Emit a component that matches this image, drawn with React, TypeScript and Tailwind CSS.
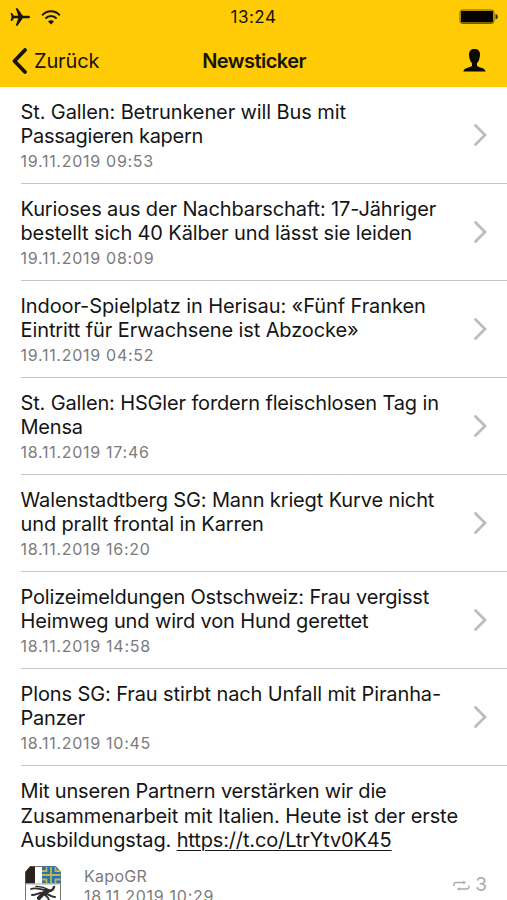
import React from 'react'

interface NewsItem {
  lines: { text: string; className: string }[];
  date: string;
}

const news: NewsItem[] = [
  {
    lines: [
      { text: 'St. Gallen: Betrunkener will Bus mit', className: 'tracking-[-0.110px]' },
      { text: 'Passagieren kapern', className: 'tracking-[-0.250px]' },
    ],
    date: '19.11.2019 09:53',
  },
  {
    lines: [
      { text: 'Kurioses aus der Nachbarschaft: 17-Jähriger', className: 'tracking-[-0.120px]' },
      { text: 'bestellt sich 40 Kälber und lässt sie leiden', className: 'tracking-[-0.130px]' },
    ],
    date: '19.11.2019 08:09',
  },
  {
    lines: [
      { text: 'Indoor-Spielplatz in Herisau: «Fünf Franken', className: 'tracking-[-0.090px]' },
      { text: 'Eintritt für Erwachsene ist Abzocke»', className: 'tracking-[-0.100px]' },
    ],
    date: '19.11.2019 04:52',
  },
  {
    lines: [
      { text: 'St. Gallen: HSGler fordern fleischlosen Tag in', className: 'tracking-[-0.150px]' },
      { text: 'Mensa', className: 'tracking-[-0.200px]' },
    ],
    date: '18.11.2019 17:46',
  },
  {
    lines: [
      { text: 'Walenstadtberg SG: Mann kriegt Kurve nicht', className: 'tracking-[-0.130px]' },
      { text: 'und prallt frontal in Karren', className: 'tracking-[-0.130px]' },
    ],
    date: '18.11.2019 16:20',
  },
  {
    lines: [
      { text: 'Polizeimeldungen Ostschweiz: Frau vergisst', className: 'tracking-[-0.170px]' },
      { text: 'Heimweg und wird von Hund gerettet', className: 'tracking-[-0.130px]' },
    ],
    date: '18.11.2019 14:58',
  },
  {
    lines: [
      { text: 'Plons SG: Frau stirbt nach Unfall mit Piranha-', className: 'tracking-[-0.110px]' },
      { text: 'Panzer', className: 'tracking-[-0.200px]' },
    ],
    date: '18.11.2019 10:45',
  },
]

const StatusBar = () => (
  <div className="grid h-[34px] grid-cols-3 items-center pl-[10px] pr-[8px]">
    <div className="flex items-center gap-[11px]">
      <svg width="20" height="18" viewBox="0 0 20 18" fill="#17140a">
        <path d="M20 9c0-.8-.9-1.3-2-1.3h-5.200L7.500.3H5.700l2.600 7.400H4L2 5H.6l1 4-1 4H2l2-2.700h4.300l-2.600 7.400h1.800l5.300-7.400H18c1.100 0 2-.5 2-1.300z" />
      </svg>
      <svg width="20" height="15" viewBox="0 0 20 15" fill="none" stroke="#17140a" strokeWidth="1.900">
        <path d="M1.200 5.300C6-.1 14-.1 18.800 5.300" />
        <path d="M4.400 8.500c3.300-3.400 7.900-3.400 11.200 0" />
        <path d="M10 14.500 7 11.500c1.700-1.600 4.300-1.600 6 0z" fill="#17140a" stroke="none" />
      </svg>
    </div>
    <span className="pr-[2px] pt-[2px] text-center text-[17px] tracking-[0.500px]">13:24</span>
    <svg className="justify-self-end" width="40" height="16" viewBox="0 0 40 16">
      <rect x="1" y="1" width="34" height="13.500" rx="2.500" fill="none" stroke="#6d5700" />
      <rect x="2" y="2" width="32" height="11.500" rx="1" fill="#050400" />
      <path d="M36.500 5v5.500c1.800-.3 2.300-1.500 2.300-2.750S38.300 5.300 36.500 5z" fill="#3a2e00" />
    </svg>
  </div>
)

const Header = () => (
  <header className="h-[87px] bg-[#ffcb05] text-[#17140a]">
    <StatusBar />
    <div className="grid h-[53px] grid-cols-3 items-center pl-[12px] pr-[21px]">
      <button className="flex items-center gap-[7px] text-left">
        <svg width="15" height="26" viewBox="0 0 15 26" fill="none" stroke="#17140a" strokeWidth="3.800" strokeLinecap="round" strokeLinejoin="round">
          <path d="M13 2 2.500 13 13 24" />
        </svg>
        <span className="text-[20px] tracking-[-0.150px]">Zurück</span>
      </button>
      <h1 className="justify-self-center whitespace-nowrap pl-[10px] text-[20px] font-semibold tracking-[-0.550px]">Newsticker</h1>
      <svg className="justify-self-end" width="23" height="23" viewBox="0 0 23 23" fill="#0a0900">
        <path d="M11.500 0C8 0 6 2 6 5.500c0 2 .3 2.500.6 3.700.3 2.500 1.400 3.800 2.400 5v2.600c-.3 1.700-8 1.700-8.700 5.700h22.400c-.7-4-8.400-4-8.700-5.700v-2.600c1-1.200 2.100-2.500 2.400-5 .3-1.200.6-1.700.6-3.700C17 2 15 0 11.500 0z" />
      </svg>
    </div>
  </header>
)

const NewsRow = ({ item }: { item: NewsItem }) => (
  <li className="flex h-[97px] pl-[20.500px]">
    <div className="flex flex-1 items-center justify-between border-b border-[#c4c4c6] pr-[20px]">
      <div className="pt-[3px]">
        {item.lines.map((line) => (
          <p key={line.text} className="whitespace-nowrap text-[20px] leading-[24.300px]">
            <span className={line.className}>{line.text}</span>
          </p>
        ))}
        <p className="pt-[1px] text-[16px] leading-[24px] tracking-[0.720px] text-[#7b7b7b]"><span>{item.date}</span></p>
      </div>
      <svg width="13" height="22" viewBox="0 0 13 22" fill="none" stroke="#bcbcc0" strokeWidth="2.800" strokeLinecap="round">
        <path d="M1.500 1.500 11 11l-9.500 9.500" />
      </svg>
    </div>
  </li>
)

const Crest = () => (
  <svg width="36" height="34" viewBox="0 0 36 34">
    <path d="M.5 6 5 .5h26L35.500 6v38H.5z" fill="#fff" stroke="#77746e" />
    <path d="M.5 17.500V6L5 .5h5v17z" fill="#28231c" />
    <path d="M17 .5h14L35.500 6v11.500H17z" fill="#2175b5" />
    <path d="M26 1v16.500M17 9h18.500M21.500 1v4H17M30.500 1v4h5M21.500 17.500v-4H17M30.500 17.500v-4h5" fill="none" stroke="#c9b248" strokeWidth="1.800" />
    <path d="M0 18h36" stroke="#aaa69e" />
    <g fill="none" stroke="#302e2c" strokeLinecap="round">
      <path d="M6 23c5-2 10 1 15 1" strokeWidth="1.800" />
      <path d="M11 20.500c6-.5 9 1 13 3.500" strokeWidth="1.500" />
      <path d="M22 25c3 0 6 0 7-4" strokeWidth="2.500" />
      <path d="M23 25c-4 1-6 4-9 7" strokeWidth="4" />
      <path d="M19 27c-5-1-7 2-12 2M21 28c3 0 5 3 9 3M20 29c3 2 4 3 4 6" strokeWidth="2" />
    </g>
  </svg>
)

const TweetRow = () => (
  <li className="pl-[20.500px] pt-[13px]">
    <p className="whitespace-nowrap text-[20px] leading-[24.500px]">
      <span className="tracking-[-0.190px]">Mit unseren Partnern verstärken wir die</span><br />
      <span className="tracking-[-0.090px]">Zusammenarbeit mit Italien. Heute ist der erste</span><br />
      <span className="tracking-[-0.140px]">Ausbildungstag. <a className="underline decoration-1 underline-offset-[3px]">https://t.co/LtrYtv0K45</a></span>
    </p>
    <div className="flex pl-[4.500px] pt-[13px] text-[#7b7b7b]">
      <Crest />
      <div className="ml-[23px] flex-1 text-[16px] leading-[20px]">
        <p className="tracking-[0.300px]"><span>KapoGR</span></p>
        <p className="tracking-[0.720px]"><span>18.11.2019 10:29</span></p>
      </div>
      <div className="flex h-[40px] items-center gap-[5px] pr-[20px] text-[#aaaaaa]">
        <svg width="17" height="12" viewBox="0 0 17 12" fill="none" stroke="#aaaaaa" strokeWidth="1.300">
          <path d="M.8 6V4.500Q.8 2.500 3 2.500h8M16 5.500V7q0 2-2.200 2H6" />
          <path d="m10.500.5 2.500 2-2.500 2zM6.500 7 4 9l2.500 2z" fill="#aaaaaa" stroke="none" />
        </svg>
        <span className="text-[19px]">3</span>
      </div>
    </div>
  </li>
)

const App = () => {
  return (
    <div className="h-[900px] w-[507px] overflow-hidden bg-white font-['Inter','Liberation_Sans',sans-serif] text-[#151515]">
      <Header />
      <ul>
        {news.map((item) => (
          <NewsRow key={item.date} item={item} />
        ))}
        <TweetRow />
      </ul>
    </div>
  )
}

export default App
